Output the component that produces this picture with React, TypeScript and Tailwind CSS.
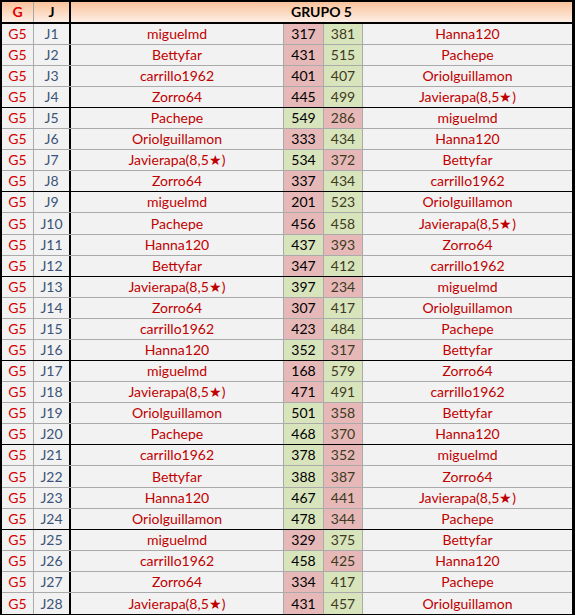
const rows: [string, number, number, string][] = [
  ["miguelmd", 317, 381, "Hanna120"],
  ["Bettyfar", 431, 515, "Pachepe"],
  ["carrillo1962", 401, 407, "Oriolguillamon"],
  ["Zorro64", 445, 499, "Javierapa(8,5★)"],
  ["Pachepe", 549, 286, "miguelmd"],
  ["Oriolguillamon", 333, 434, "Hanna120"],
  ["Javierapa(8,5★)", 534, 372, "Bettyfar"],
  ["Zorro64", 337, 434, "carrillo1962"],
  ["miguelmd", 201, 523, "Oriolguillamon"],
  ["Pachepe", 456, 458, "Javierapa(8,5★)"],
  ["Hanna120", 437, 393, "Zorro64"],
  ["Bettyfar", 347, 412, "carrillo1962"],
  ["Javierapa(8,5★)", 397, 234, "miguelmd"],
  ["Zorro64", 307, 417, "Oriolguillamon"],
  ["carrillo1962", 423, 484, "Pachepe"],
  ["Hanna120", 352, 317, "Bettyfar"],
  ["miguelmd", 168, 579, "Zorro64"],
  ["Javierapa(8,5★)", 471, 491, "carrillo1962"],
  ["Oriolguillamon", 501, 358, "Bettyfar"],
  ["Pachepe", 468, 370, "Hanna120"],
  ["carrillo1962", 378, 352, "miguelmd"],
  ["Bettyfar", 388, 387, "Zorro64"],
  ["Hanna120", 467, 441, "Javierapa(8,5★)"],
  ["Oriolguillamon", 478, 344, "Pachepe"],
  ["miguelmd", 329, 375, "Bettyfar"],
  ["carrillo1962", 458, 425, "Hanna120"],
  ["Zorro64", 334, 417, "Pachepe"],
  ["Javierapa(8,5★)", 431, 457, "Oriolguillamon"],
];

const cols = "grid grid-cols-[32px_37px_213px_40px_39px_209px]";
const red = "bg-[#e6b8b7]";
const green = "bg-[#d8e4bc]";

const App = () => {
  return (
    <div
      className="w-[575px] bg-white"
      style={{ fontFamily: "Lato, 'Open Sans', sans-serif" }}
    >
      <div className="border-l-2 border-t-2 border-r-[3px] border-b-[3px] border-black text-[14px] leading-none">
        {/* header */}
        <div className={`${cols} h-[22px] border-b-2 border-black bg-gradient-to-b from-[#f9c39c] to-[#fdeee4]`}>
          <div className="flex items-center justify-center border-r border-[#a6a6a6] font-bold text-[#e00000]">G</div>
          <div className="flex items-center justify-center border-r-2 border-black font-bold text-black">J</div>
          <div className="col-span-4 flex items-center justify-center font-bold text-black">GRUPO 5</div>
        </div>

        {rows.map(([a, s1, s2, b], i) => {
          const last = i === rows.length - 1;
          const groupEnd = (i + 1) % 4 === 0;
          const line = last ? "" : groupEnd ? "border-b border-black" : "border-b border-[#aaaaaa]";
          const h = i === 9 || i === 21 ? "h-[22px]" : "h-[21px]";
          return (
            <div key={i} className={`${cols} ${h} bg-[#f2f2f2] ${line}`}>
              <div className="flex items-center justify-center border-r border-[#aaaaaa] text-[#d40000]">G5</div>
              <div className="flex items-center justify-center border-r-2 border-black text-[#3b5478]">J{i + 1}</div>
              <div className="flex items-center justify-center border-r border-[#aaaaaa] text-[#c00000]">{a}</div>
              <div className={`flex items-center justify-center border-r border-[#aaaaaa] text-black ${s1 > s2 ? green : red}`}>{s1}</div>
              <div className={`flex items-center justify-center border-r border-[#aaaaaa] text-[#3d3a22] ${s2 > s1 ? green : red}`}>{s2}</div>
              <div className="flex items-center justify-center text-[#c00000]">{b}</div>
            </div>
          );
        })}
      </div>
    </div>
  );
};

export default App;
